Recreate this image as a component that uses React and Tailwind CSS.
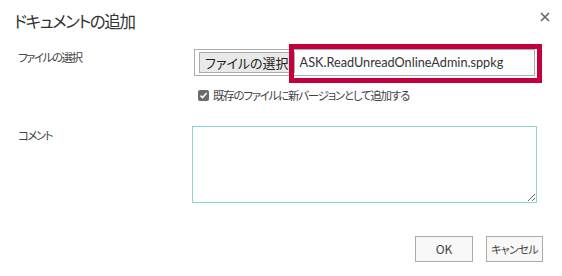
import React from 'react';

const jp = "font-['Meiryo_UI','Noto_Sans_CJK_JP',sans-serif] [font-feature-settings:'palt']";

const App = () => {
  return (
    <div className={`relative w-[562px] h-[276px] bg-white text-[#444] ${jp}`}>
      {/* header */}
      <div className="flex items-start justify-between pl-[14px] pr-[12px] pt-[9px]">
        <h1 className="text-[16.5px] leading-[24px] tracking-[-1.4px] text-[#333]">ドキュメントの追加</h1>
        <button className="mt-[3px] text-[#666]" aria-label="閉じる">
          <svg width="10" height="10" viewBox="0 0 10 10">
            <path d="M1 1L9 9M9 1L1 9" stroke="#666" strokeWidth="1.6" />
          </svg>
        </button>
      </div>

      {/* file row */}
      <div className="flex pl-[18px] mt-[15px]">
        <div className="w-[176px] text-[11.5px] leading-[16px] tracking-[-1.5px] pt-[1px]">ファイルの選択</div>
        <div className="flex flex-col">
          <div className="flex items-center w-[341px] h-[27px] mt-[1px] border border-[#ababab] px-[4px]">
            <span className="h-[21px] px-[5px] flex items-center bg-[#e9e9e9] border border-[#adadad] text-[13px] text-[#222]">
              ファイルの選択
            </span>
            <span className="ml-[5px] text-[12.7px] text-[#333] font-['Lato',sans-serif]">
              ASK.ReadUnreadOnlineAdmin.sppkg
            </span>
          </div>
          <label className="flex items-center gap-[4px] mt-[11px] ml-[4px] text-[11.5px] leading-[16px] tracking-[-1.25px]">
            <span className="w-[11px] h-[11px] rounded-[2px] bg-[#6b6b6b] flex items-center justify-center">
              <svg width="9" height="9" viewBox="0 0 9 9">
                <path d="M1.5 4.6L3.6 6.6L7.6 2" stroke="white" strokeWidth="1.5" fill="none" />
              </svg>
            </span>
            既存のファイルに新バージョンとして追加する
          </label>
        </div>
      </div>

      {/* comment row */}
      <div className="flex pl-[18px] mt-[23px]">
        <div className="w-[174px] text-[11.5px] leading-[16px] tracking-[-1.5px] pt-[1px]">コメント</div>
        <textarea className="w-[345px] h-[77px] border border-[#8fd3d3] outline-none resize" />
      </div>

      {/* buttons */}
      <div className="flex justify-end gap-[13px] pr-[19px] mt-[33px]">
        <button className="w-[58px] h-[26px] bg-[#f8f8f8] border border-[#ababab] text-[12px] text-[#444]">OK</button>
        <button className="w-[57px] h-[26px] bg-[#f8f8f8] border border-[#ababab] text-[11px] tracking-[-0.6px] whitespace-nowrap text-[#444]">キャンセル</button>
      </div>

      {/* red highlight annotation */}
      <div className="absolute left-[289px] top-[44px] w-[253px] h-[39px] border-[5px] border-[#c4003c] pointer-events-none" />
    </div>
  );
};

export default App;
